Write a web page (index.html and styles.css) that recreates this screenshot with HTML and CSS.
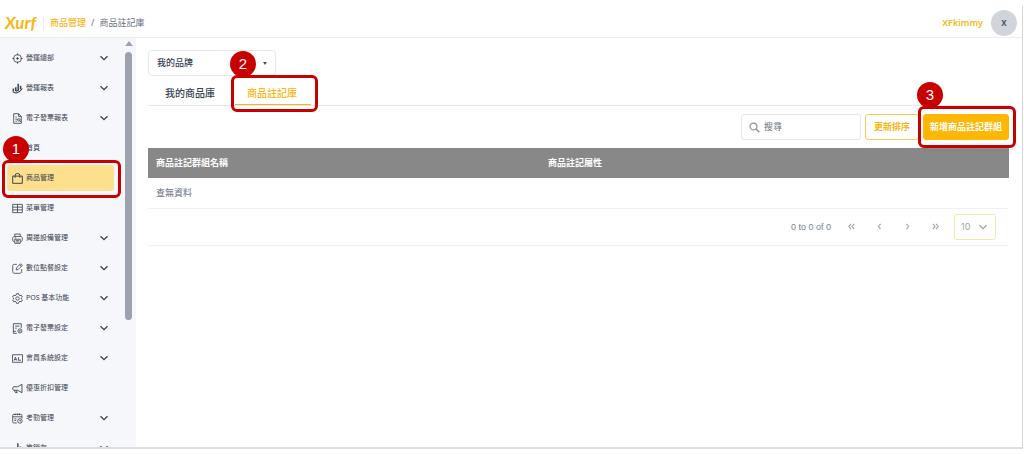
FILE: index.html
```html
<!DOCTYPE html>
<html lang="zh-Hant">
<head>
<meta charset="utf-8">
<meta name="viewport" content="width=device-width, initial-scale=1">
<title>商品註記庫</title>
<link rel="stylesheet" href="styles.css">
</head>
<body>
<svg class="sprite" aria-hidden="true">
  <symbol id="chevron" viewBox="0 0 10 10"><path d="M1.500 3.200 5 6.700l3.500-3.500"/></symbol>
  <symbol id="bars" viewBox="0 0 16 16"><path d="M1.500 9.500v6M5 6.500v9M8.500 .5v15M12 5v10.500M15 8.500v7" stroke-width="2"/></symbol>
</svg>
<div class="app">
  <header class="topbar">
    <a class="logo" href="#">Xurf</a>
    <nav class="crumbs" aria-label="breadcrumb">
      <a href="#">商品管理</a><span>/</span><span>商品註記庫</span>
    </nav>
    <span class="user">XFkimmy</span>
    <button class="avatar" type="button">X</button>
  </header>
  <div class="body">
    <aside class="sidebar">
      <nav class="menu">
        <a class="item" href="#"><svg class="icon" viewBox="0 0 16 16"><circle cx="8" cy="8" r="5.700"/><circle cx="8" cy="8" r="1.200" fill="currentColor"/><path d="M8 .5v3M8 12.500v3M.5 8h3M12.500 8h3"/></svg><span>營運總部</span><svg class="chev"><use href="#chevron"/></svg></a>
        <a class="item" href="#"><svg class="icon" viewBox="0 0 16 16"><path d="M2 8v4M5.500 6v6M9 1v10M12.500 4v5" stroke-width="2.200"/><path d="M1 12.500c3 3 9 3 14-4.500M6 12l4-2" stroke-width="1.500"/></svg><span>營運報表</span><svg class="chev"><use href="#chevron"/></svg></a>
        <a class="item" href="#"><svg class="icon" viewBox="0 0 16 16"><path d="M2.500 1h7l4 4v10h-11zM9.500 1v4h4M5 6h2M5 9h3M5 12h2"/><circle cx="10" cy="10" r="1.800"/><path d="m11.300 11.300 1.700 1.700"/></svg><span>電子發票報表</span><svg class="chev"><use href="#chevron"/></svg></a>
        <a class="item" href="#"><svg class="icon" viewBox="0 0 16 16"><path d="m1 8 7-6 7 6M3 7v7h10V7"/></svg><span>首頁</span></a>
        <div class="anchor">
          <a class="item active" href="#" aria-current="page"><svg class="icon" viewBox="0 0 16 16"><path d="M1 4.500h14v10.500H1zM4.500 7V4a3.500 3.500 0 0 1 7 0v3" stroke-width="1.400"/></svg><span>商品管理</span></a>
          <span class="outline outline-menu"></span><span class="badge badge-menu">1</span>
        </div>
        <a class="item" href="#"><svg class="icon" viewBox="0 0 16 16"><path d="M1 2h14v12H1zM1 6h14M1 10h14M8 2v12"/></svg><span>菜單管理</span></a>
        <a class="item" href="#"><svg class="icon" viewBox="0 0 16 16"><path d="M4 5V1.500h8V5M3.500 12.500C1.500 12.500 1 11.500 1 10V7.500C1 6 2 5 3.500 5h9C14 5 15 6 15 7.500V10c0 1.500-.5 2.500-2.500 2.500M4 9h8v6H4zM6 11h4M6 13h4M4 7h2"/></svg><span>周邊設備管理</span><svg class="chev"><use href="#chevron"/></svg></a>
        <a class="item" href="#"><svg class="icon" viewBox="0 0 16 16"><path d="M7 2H3.500C2 2 1 3 1 4.500v8C1 14 2 15 3.500 15h8c1.500 0 2.500-1 2.500-2.500V9M6 10l.6-3L12 1.500c1-1 3.500 1.200 2.500 2.400L9 9.400zM11 2.500 13.500 5"/></svg><span>數位點餐設定</span><svg class="chev"><use href="#chevron"/></svg></a>
        <a class="item" href="#"><svg class="icon" viewBox="0 0 16 16"><path d="m6.500 1h3l.5 2 1.600.9 2-.6 1.500 2.600L13.600 7.300v1.400l1.500 1.400-1.500 2.600-2-.6L10 13l-.5 2h-3L6 13l-1.600-.9-2 .6-1.500-2.600 1.500-1.400V7.300L.9 5.900l1.500-2.600 2 .6L6 3z"/><circle cx="8" cy="8" r="2.500"/></svg><span>POS 基本功能</span><svg class="chev"><use href="#chevron"/></svg></a>
        <a class="item" href="#"><svg class="icon" viewBox="0 0 16 16"><path d="M7 15H2V1h11.500v6M4.500 4.500H11M4.500 7.500H7M2 12h4"/><circle cx="11.500" cy="11.500" r="3"/><circle cx="11.500" cy="11.500" r=".7"/></svg><span>電子發票設定</span><svg class="chev"><use href="#chevron"/></svg></a>
        <a class="item" href="#"><svg class="icon" viewBox="0 0 16 16"><path d="M.7 2.500h14.600v11H.7zM3 11l2-5 2 5M4 9.500h2M9.500 6v4.500M9 10.500h4"/></svg><span>會員系統設定</span><svg class="chev"><use href="#chevron"/></svg></a>
        <a class="item" href="#"><svg class="icon" viewBox="0 0 16 16"><path d="M14.500 2v12L8 10.500H2.500C.5 10.500.5 5.500 2.500 5.500H8zM3.500 10.500 5 14h2.500l-1-3.500" stroke-width="1.300"/></svg><span>優惠折扣管理</span></a>
        <a class="item" href="#"><svg class="icon" viewBox="0 0 16 16"><path d="M7 14.500H3C1.500 14.500 1 14 1 12.500v-9C1 2.500 1.500 2 3 2h9.500C14 2 14.500 2.500 14.500 4v4M1 5.500h13.500M4.500.7v2.500M8 .7v2.500M11 .7v2.500M3.500 8.500h3M3.500 11H6"/><circle cx="11.500" cy="11.500" r="3.300"/><path d="M11.500 9.800v1.900h1.500"/></svg><span>考勤管理</span><svg class="chev"><use href="#chevron"/></svg></a>
        <a class="item" href="#"><svg class="icon"><use href="#bars"/></svg><span>進銷存</span><svg class="chev"><use href="#chevron"/></svg></a>
      </nav>
      <div class="scroll" aria-hidden="true"><i class="scroll-up"></i><i class="scroll-thumb"></i></div>
    </aside>
    <main class="main">
      <div class="brand">
        <select aria-label="品牌"><option>我的品牌</option></select>
        <i class="caret"></i>
      </div>
      <div class="tabs" role="tablist">
        <button class="tab" type="button" role="tab" aria-selected="false">我的商品庫</button>
        <div class="anchor">
          <button class="tab selected" type="button" role="tab" aria-selected="true">商品註記庫</button>
          <span class="outline outline-tab"></span><span class="badge badge-tab">2</span>
        </div>
      </div>
      <div class="tools">
        <label class="search">
          <svg class="icon" viewBox="0 0 16 16"><circle cx="6.500" cy="6.500" r="5" stroke-width="1.800"/><path d="m10.300 10.300 4.700 4.700" stroke-width="2"/></svg>
          <input type="text" placeholder="搜尋" aria-label="搜尋">
        </label>
        <button class="btn" type="button">更新排序</button>
        <div class="anchor">
          <button class="btn primary" type="button">新增商品註記群組</button>
          <span class="outline outline-add"></span><span class="badge badge-add">3</span>
        </div>
      </div>
      <table class="grid">
        <thead><tr><th>商品註記群組名稱</th><th>商品註記屬性</th></tr></thead>
        <tbody><tr><td colspan="2">查無資料</td></tr></tbody>
      </table>
      <div class="pager">
        <span class="range">0 to 0 of 0</span>
        <button type="button" aria-label="第一頁"><svg viewBox="0 0 10 10"><path d="M4.500 2 2 5l2.500 3M8 2 5.500 5 8 8"/></svg></button>
        <button type="button" aria-label="上一頁"><svg viewBox="0 0 10 10"><path d="M6.200 2 3.700 5l2.500 3"/></svg></button>
        <button type="button" aria-label="下一頁"><svg viewBox="0 0 10 10"><path d="M3.800 2l2.500 3-2.500 3"/></svg></button>
        <button type="button" aria-label="最後一頁"><svg viewBox="0 0 10 10"><path d="M2 2l2.500 3L2 8M5.500 2 8 5 5.500 8"/></svg></button>
        <div class="size"><select aria-label="每頁筆數"><option>10</option></select><svg class="chev"><use href="#chevron"/></svg></div>
      </div>
    </main>
  </div>
</div>
</body>
</html>
```
FILE: styles.css
```css
* { box-sizing: border-box; }
body {
  margin: 0;
  padding: 6px 1px 6px 0;
  height: 100vh;
  background: #fff;
  color: #374151;
  font: 9px/12px "Noto Sans", "Noto Sans CJK TC", sans-serif;
}
button, input, select { font: inherit; color: inherit; margin: 0; }
button { cursor: pointer; }
a { color: inherit; text-decoration: none; }
svg { fill: none; stroke: currentColor; stroke-width: 1.200; }
.sprite { display: none; }
.anchor { position: relative; }

.app {
  display: flex;
  flex-direction: column;
  height: 100%;
  border-right: 1px solid #d4d4d4;
  border-bottom: 2px solid #dfdfdf;
}
.topbar {
  display: flex;
  align-items: center;
  padding: 4px 5px 1px 5px;
  border-bottom: 1px solid #ededed;
}
.logo {
  width: 39px;
  border-right: 1px solid #eee;
  color: #fbb615;
  font: italic 700 17px/14px Lato, sans-serif;
}
.crumbs { display: flex; gap: 5px; padding-left: 6px; color: #6b7280; }
.crumbs a { color: #fbb615; font-weight: 500; }
.user { margin-left: auto; padding-right: 8px; color: #fbb615; font-weight: 600; }
.avatar {
  width: 26px;
  height: 26px;
  padding: 0;
  border: 0;
  border-radius: 50%;
  background: #d1d5db;
  color: #4b5563;
  font-size: 8px;
  font-weight: 700;
}

.body { display: flex; flex: 1; min-height: 0; }
.sidebar { display: flex; flex: none; width: 136px; background: #f6f7fa; overflow: hidden; }
.menu { display: flex; flex: 1; flex-direction: column; gap: 4px; padding: 7px 10px 0 7px; }
.item {
  display: flex;
  flex: none;
  align-items: center;
  gap: 3px;
  height: 26px;
  padding: 0 5px;
  border-radius: 3px;
  font-size: 7px;
}
.active { background: #fddf8d; }
.icon { flex: none; width: 11px; height: 11px; }
.chev { width: 10px; height: 10px; margin-left: auto; stroke-width: 1.300; }
.scroll { display: flex; flex-direction: column; align-items: center; gap: 6px; width: 9px; margin: 3px 3px 0 0; }
.scroll-up { border: 4px solid transparent; border-top: 0; border-bottom: 5px solid #9ca3af; }
.scroll-thumb { width: 7px; height: 66%; min-height: 40px; border-radius: 4px; background: #9ca3af; }

.main { flex: 1; min-width: 0; padding: 12px 13px 0 12px; }
.brand { position: relative; width: 128px; }
.brand select {
  width: 100%;
  height: 26px;
  padding: 0 8px;
  border: 1px solid #e5e7eb;
  border-radius: 4px;
  appearance: none;
  background: #fff;
  font-weight: 500;
}
.caret {
  position: absolute;
  top: 12px;
  right: 9px;
  border: 2px solid transparent;
  border-top: 3px solid #4b5563;
  border-bottom: 0;
}
.tabs { display: flex; gap: 6px; border-bottom: 1px solid #e5e7eb; }
.tab {
  height: 29px;
  padding: 5px 14px 0 12px;
  border: 0;
  border-bottom: 1px solid transparent;
  background: none;
  font-size: 10px;
  font-weight: 500;
}
.tab:first-child { padding-left: 17px; }
.tabs .selected { padding-left: 12px; border-color: #fbb615; color: #fbb615; }
.tools { display: flex; justify-content: flex-end; gap: 4px; padding: 8px 0; }
.search {
  display: flex;
  align-items: center;
  gap: 4px;
  width: 120px;
  height: 26px;
  padding: 0 7px;
  border: 1px solid #e5e7eb;
  border-radius: 3px;
  color: #8b93a0;
}
.search input { flex: 1; min-width: 0; padding: 0; border: 0; outline: 0; background: none; }
.search input::placeholder { color: #6b7280; }
.btn {
  height: 26px;
  padding: 0 8px;
  border: 1px solid #fccb58;
  border-radius: 3px;
  background: #fff;
  color: #fbb615;
  font-weight: 700;
  white-space: nowrap;
}
.tools .primary { padding: 0 6px; border-color: #ffb703; background: #ffb703; color: #fff; }

.grid { width: 100%; border-collapse: collapse; table-layout: fixed; }
.grid th, .grid td { height: 30px; padding: 0 8px; text-align: left; }
.grid th:first-child { width: 392px; }
.grid th { background: #888; color: #fff; font-weight: 700; }
.grid td { border-bottom: 1px solid #f1f1f1; color: #6b7280; }
.pager {
  display: flex;
  align-items: center;
  justify-content: flex-end;
  padding: 5px 13px;
  border-bottom: 1px solid #f1f1f1;
  color: #9ca3af;
}
.range { padding-right: 6px; color: #7b838f; font-family: "Liberation Sans", sans-serif; }
.pager button { display: grid; place-items: center; width: 28px; height: 26px; padding: 0; border: 0; background: none; }
.pager button svg { width: 9px; height: 9px; }
.size {
  display: flex;
  align-items: center;
  width: 42px;
  height: 26px;
  margin-left: 5px;
  padding: 0 7px 0 6px;
  border: 1px solid #fde4a5;
  border-radius: 3px;
}
.size select { width: 14px; padding: 0; border: 0; appearance: none; background: none; font-family: Inter, sans-serif; }

.outline {
  position: absolute;
  z-index: 1;
  border: 3px solid #c80000;
  border-radius: 6px;
  pointer-events: none;
}
.badge {
  position: absolute;
  z-index: 2;
  width: 26px;
  height: 26px;
  border-radius: 50%;
  background: #c80000;
  color: #fff;
  font: 15px/26px "Liberation Sans", sans-serif;
  text-align: center;
}
.outline-menu { inset: -5px -7px -7px -5px; }
.badge-menu { top: -29px; left: -4px; }
.outline-tab { inset: -1px -7px -7px -4px; }
.badge-tab { top: -25px; left: -5px; }
.outline-add { inset: -8px -7px -8px -5px; }
.badge-add { top: -32px; left: -6px; }
```
